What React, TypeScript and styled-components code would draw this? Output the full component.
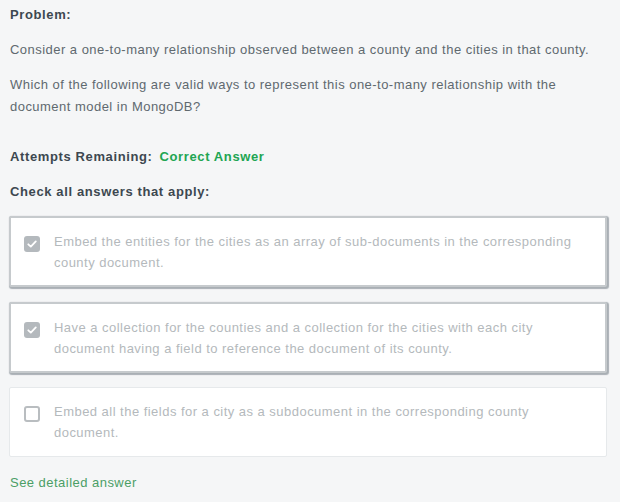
import React from "react";
import styled, { createGlobalStyle } from "styled-components";

const Global = createGlobalStyle`
  html, body { margin: 0; padding: 0; background: #f5f6f7; }
  body { font-family: "Liberation Sans", Arial, sans-serif; }
`;

const Page = styled.div`
  padding: 7px 13px 12px 9px;
  letter-spacing: 0.47px;
`;

const Label = styled.div`
  font-size: 13px;
  font-weight: bold;
  color: #3d4850;
  line-height: 16px;
  padding-left: 1px;
  letter-spacing: 0.62px;
`;

const Para = styled.p<{ $gap: number }>`
  margin: ${(p) => p.$gap}px 0 0;
  font-size: 13px;
  line-height: 22px;
  color: #60696f;
  padding-left: 1px;
`;

const Attempts = styled(Label)`
  display: flex;
  gap: 7px;
  margin-top: 31px;
`;

const Instructions = styled(Label)`
  margin-top: 19px;
`;

const Green = styled.span`
  color: #21a552;
`;

const Cards = styled.div`
  display: flex;
  flex-direction: column;
  gap: 15px;
  margin-top: 16px;
`;

const Card = styled.div<{ $selected?: boolean }>`
  display: flex;
  align-items: flex-start;
  gap: 14px;
  box-sizing: border-box;
  min-height: ${(p) => (p.$selected ? 71 : 70)}px;
  background: #ffffff;
  border-radius: 2px;
  border: ${(p) => (p.$selected ? "2px solid #c6cacd" : "1px solid #e6e9eb")};
  box-shadow: ${(p) => (p.$selected ? "1px 1px 1px 1px #a9afb4" : "none")};
  padding: ${(p) => (p.$selected ? "13px 16px 0 13px" : "13px 17px 0 14px")};
  &:last-child { margin-top: -1px; }
`;

const Box = styled.span<{ $checked?: boolean }>`
  flex: none;
  width: 16px;
  height: 16px;
  margin-top: 5px;
  box-sizing: border-box;
  border-radius: 3px;
  display: flex;
  align-items: center;
  justify-content: center;
  background: ${(p) => (p.$checked ? "#b4b9bd" : "#ffffff")};
  border: ${(p) => (p.$checked ? "none" : "2px solid #b9bdc0")};
`;

const CardText = styled.div`
  font-size: 13px;
  line-height: 21px;
  color: #b4b9bc;
`;

const Link = styled.a`
  display: block;
  margin-top: 18px;
  font-size: 13px;
  line-height: 16px;
  color: #4b9e66;
  text-decoration: none;
  padding-left: 1px;
`;

const Check = () => (
  <svg width="12" height="12" viewBox="0 0 12 12">
    <path d="M2.3 6.3 L4.8 8.6 L9.8 3.4" fill="none" stroke="#fff" strokeWidth="1.8" strokeLinecap="round" strokeLinejoin="round" />
  </svg>
);

const options = [
  { text: "Embed the entities for the cities as an array of sub-documents in the corresponding county document.", checked: true },
  { text: "Have a collection for the counties and a collection for the cities with each city document having a field to reference the document of its county.", checked: true },
  { text: "Embed all the fields for a city as a subdocument in the corresponding county document.", checked: false },
];

export default function App() {
  return (
    <>
      <Global />
      <Page>
        <Label>Problem:</Label>
        <Para $gap={16}>
          Consider a one-to-many relationship observed between a county and the cities in that county.
        </Para>
        <Para $gap={13}>
          Which of the following are valid ways to represent this one-to-many relationship with the document model in MongoDB?
        </Para>
        <Attempts>
          <span>Attempts Remaining:</span>
          <Green>Correct Answer</Green>
        </Attempts>
        <Instructions>Check all answers that apply:</Instructions>
        <Cards>
          {options.map((o, i) => (
            <Card key={i} $selected={o.checked}>
              <Box $checked={o.checked}>{o.checked && <Check />}</Box>
              <CardText>{o.text}</CardText>
            </Card>
          ))}
        </Cards>
        <Link href="#">See detailed answer</Link>
      </Page>
    </>
  );
}
